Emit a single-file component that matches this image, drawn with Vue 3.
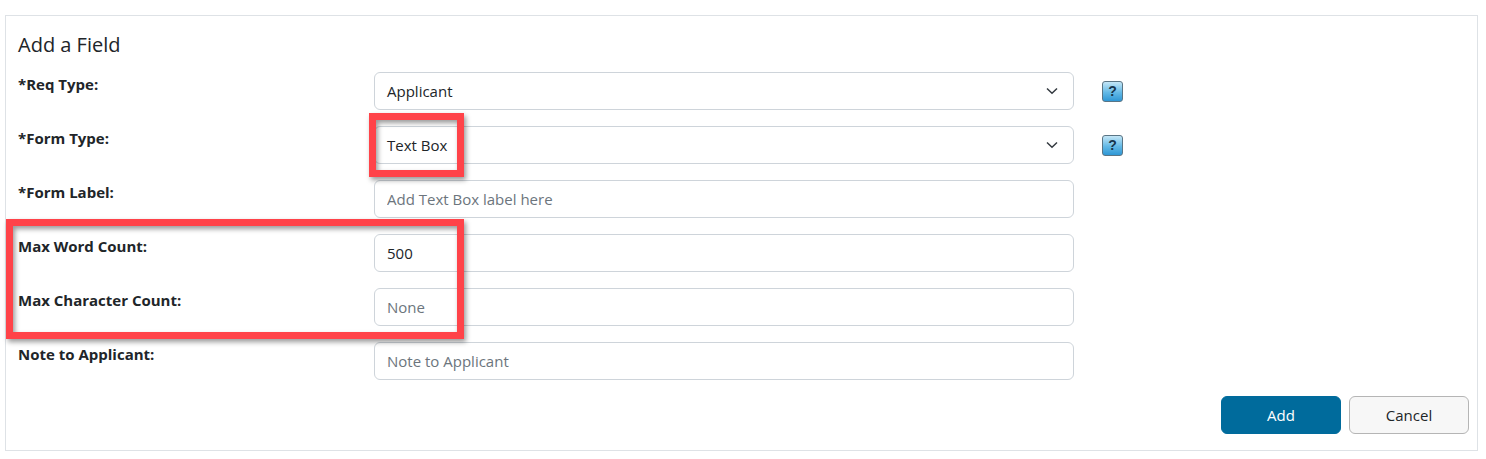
<script setup>
const rows = [
  { label: '*Req Type:', kind: 'select', value: 'Applicant', help: true },
  { label: '*Form Type:', kind: 'select', value: 'Text Box', help: true },
  { label: '*Form Label:', kind: 'input', placeholder: 'Add Text Box label here' },
  { label: 'Max Word Count:', kind: 'input', value: '500' },
  { label: 'Max Character Count:', kind: 'input', placeholder: 'None' },
  { label: 'Note to Applicant:', kind: 'input', placeholder: 'Note to Applicant' }
];
</script>

<template>
  <div class="page">
    <div class="panel">
      <h2 class="title">Add a Field</h2>
      <div v-for="row in rows" :key="row.label" class="row">
        <label class="label">{{ row.label }}</label>
        <div v-if="row.kind === 'select'" class="control">
          <span>{{ row.value }}</span>
          <svg class="chevron" width="12" height="8" viewBox="0 0 12 8">
            <path d="M1 1.5 L6 6.2 L11 1.5" fill="none" stroke="#343a40" stroke-width="1.5" />
          </svg>
        </div>
        <input v-else class="control" :value="row.value" :placeholder="row.placeholder" />
        <div v-if="row.help" class="help">?</div>
      </div>
      <div class="actions">
        <button class="btn primary">Add</button>
        <button class="btn secondary">Cancel</button>
      </div>
    </div>
    <div class="mark mark-type"></div>
    <div class="mark mark-counts"></div>
  </div>
</template>

<style scoped>
.page {
  position: relative;
  width: 1486px;
  height: 459px;
  padding: 15px 8px 0 5px;
  box-sizing: border-box;
  background: #fff;
  font-family: "Open Sans", "Noto Sans", sans-serif;
  color: #212529;
  overflow: hidden;
}

.panel {
  height: 436px;
  box-sizing: border-box;
  border: 1px solid #dee2e6;
  padding: 18px 8px 0 12px;
}

.title {
  margin: 0 0 16px;
  font-size: 20px;
  line-height: 22px;
  font-weight: 500;
}

.row {
  display: flex;
  align-items: flex-start;
  height: 38px;
  margin-bottom: 16px;
}

.label {
  width: 356px;
  flex: none;
  font-size: 15px;
  font-weight: 700;
  line-height: 24px;
}

.control {
  width: 700px;
  height: 38px;
  flex: none;
  box-sizing: border-box;
  display: flex;
  align-items: center;
  justify-content: space-between;
  padding: 0 15px 0 12px;
  border: 1px solid #ced4da;
  border-radius: 6px;
  background: #fff;
  font-family: inherit;
  font-size: 15px;
  color: #212529;
  outline: none;
}

.control::placeholder {
  color: #6c757d;
  opacity: 1;
}

.help {
  width: 21px;
  height: 21px;
  box-sizing: border-box;
  margin: 9px 0 0 28px;
  border: 1px solid #5a7585;
  border-radius: 3px;
  background: linear-gradient(#c4e6f6, #63b9e6 55%, #2f97d5);
  font-family: "Liberation Sans", sans-serif;
  font-size: 14px;
  font-weight: 700;
  line-height: 19px;
  text-align: center;
  color: #17364d;
}

.actions {
  display: flex;
  justify-content: flex-end;
  gap: 8px;
}

.btn {
  width: 120px;
  height: 38px;
  border-radius: 6px;
  font-family: inherit;
  font-size: 15px;
  padding: 0;
}

.primary {
  border: 1px solid #006b9c;
  background: #006b9c;
  color: #fff;
}

.secondary {
  border: 1px solid #b5b5b5;
  background: #f7f7f7;
  color: #212529;
}

.mark {
  position: absolute;
  box-sizing: border-box;
  border: 7px solid #ff4349;
  box-shadow: 2px 3px 5px rgba(0, 0, 0, 0.4), inset 2px 3px 5px rgba(0, 0, 0, 0.4);
}

.mark-type {
  left: 369px;
  top: 113px;
  width: 95px;
  height: 64px;
}

.mark-counts {
  left: 6px;
  top: 219px;
  width: 458px;
  height: 120px;
}
</style>
